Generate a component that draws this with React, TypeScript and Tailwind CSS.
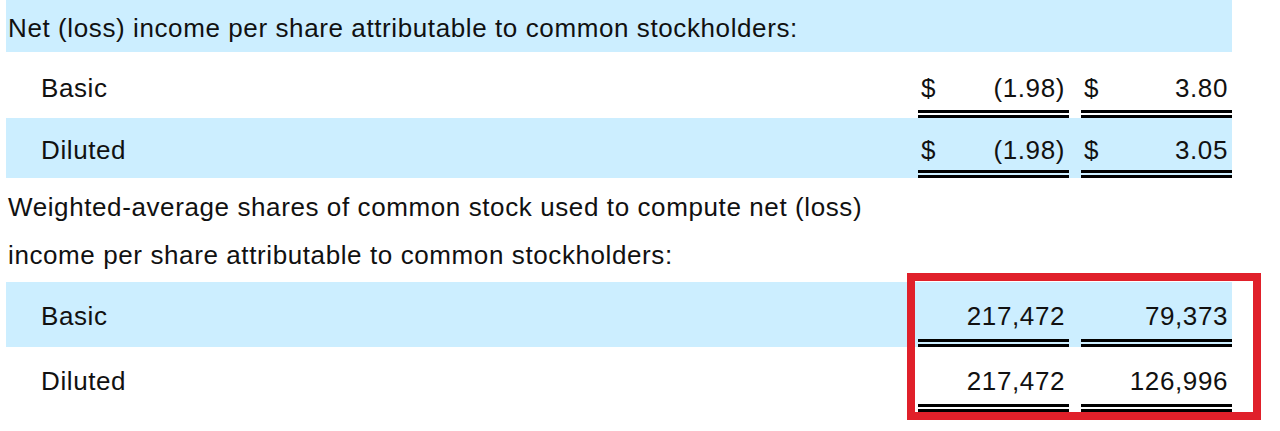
const rowBlue = "bg-[#cceeff]";

interface Row {
  label: string;
  indent?: boolean;
  blue?: boolean;
  h: string;
  pt: string;
  values?: { dollar?: boolean; a: string; b: string };
}

const rows: Row[] = [
  { label: "Net (loss) income per share attributable to common stockholders:", blue: true, h: "h-[52px]", pt: "pt-[14px]" },
  { label: "Basic", indent: true, h: "h-[66px]", pt: "pt-[22px]", values: { dollar: true, a: "(1.98)", b: "3.80" } },
  { label: "Diluted", indent: true, blue: true, h: "h-[60px]", pt: "pt-[18px]", values: { dollar: true, a: "(1.98)", b: "3.05" } },
  { label: "Weighted-average shares of common stock used to compute net (loss)", h: "h-[55px]", pt: "pt-[15px]" },
  { label: "income per share attributable to common stockholders:", h: "h-[49px]", pt: "pt-[8px]" },
  { label: "Basic", indent: true, blue: true, h: "h-[65px]", pt: "pt-[20px]", values: { a: "217,472", b: "79,373" } },
  { label: "Diluted", indent: true, h: "h-[65px]", pt: "pt-[20px]", values: { a: "217,472", b: "126,996" } },
];

function ValueCell({ dollar, value }: { dollar?: boolean; value: string }) {
  return (
    <div className="w-[151px] flex justify-between border-b-[8px] border-double border-black pl-[3px] pr-[4px]">
      <span>{dollar ? "$" : ""}</span>
      <span>{value}</span>
    </div>
  );
}

export default function App() {
  return (
    <div
      className="relative w-[1280px] h-[431px] bg-white text-[26px] tracking-[0.6px] leading-[28px] text-[#111]"
      style={{ fontFamily: '"Liberation Sans", Arial, sans-serif' }}
    >
      <div className="pl-[6px] w-[1232px]">
        {rows.map((r, i) => (
          <div key={i} className={`flex ${r.h} ${r.blue ? rowBlue : ""}`}>
            <div className={`flex-1 ${r.pt} ${r.indent ? "pl-[35px]" : "pl-[2px]"} whitespace-nowrap`}>{r.label}</div>
            {r.values && (
              <div className={`flex gap-[12px] ${r.pt}`}>
                <ValueCell dollar={r.values.dollar} value={r.values.a} />
                <ValueCell dollar={r.values.dollar} value={r.values.b} />
              </div>
            )}
          </div>
        ))}
      </div>
      {/* highlight box */}
      <div className="absolute left-[907px] top-[273px] w-[354px] h-[147px] border-[8px] border-[#e0202a]" />
    </div>
  );
}
